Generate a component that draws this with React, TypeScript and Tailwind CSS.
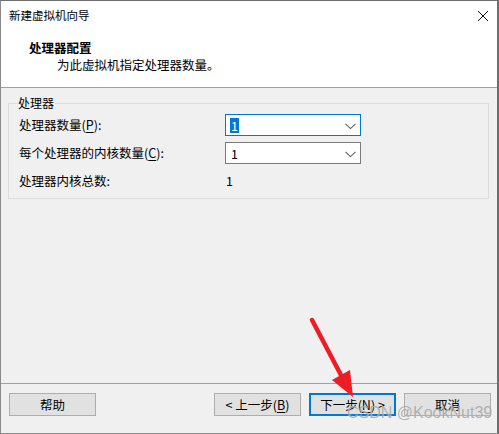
import React from "react";

const font = { fontFamily: '"Noto Sans CJK SC", "Microsoft YaHei", sans-serif' };

function Chevron() {
  return (
    <svg width="11" height="7" viewBox="0 0 11 7" className="absolute right-[4px] top-[8px]">
      <path d="M0.5 0.8 L5.5 5.6 L10.5 0.8" fill="none" stroke="#606060" strokeWidth="1.1" />
    </svg>
  );
}

function U({ children }: { children: React.ReactNode }) {
  return <span className="underline underline-offset-2">{children}</span>;
}

export default function App() {
  return (
    <div
      className="relative w-[499px] h-[434px] bg-[#f0f0f0] border-t border-l border-b border-r-2 border-t-[#6e6e6e] border-l-[#8a8a8a] border-b-[#8a8a8a] border-r-[#6e6e6e] flex flex-col text-[12.5px] text-black overflow-hidden"
      style={font}
    >
      {/* Header */}
      <div className="h-[86px] bg-white relative shrink-0 border-b border-[#a0a0a0] box-content">
        <div className="absolute left-[8px] top-[5px] text-[11.5px] leading-[18px]">新建虚拟机向导</div>
        <svg width="12" height="12" viewBox="0 0 12 12" className="absolute right-[8px] top-[9px]">
          <path d="M1 1 L11 11 M11 1 L1 11" stroke="#111" strokeWidth="1" />
        </svg>
        <div className="absolute left-[28px] top-[38px] font-bold leading-[18px]">处理器配置</div>
        <div className="absolute left-[56px] top-[55px] leading-[18px]">为此虚拟机指定处理器数量。</div>
      </div>

      {/* Content */}
      <div className="flex-1 pt-[15px] pl-[7px] pr-[8px]">
        <div className="relative border border-[#dcdcdc] pt-[10px] pb-[6px] pl-[10px] flex flex-col gap-[6px]">
          <div className="absolute left-[8px] top-[-10px] px-[1px] bg-[#f0f0f0] text-[12px] leading-[18px]">处理器</div>
          <div className="flex items-center h-[22px]">
            <div className="w-[206px] leading-[18px]">
              处理器数量(<U>P</U>):
            </div>
            <div className="relative w-[136px] h-[22px] bg-white border border-[#0078d7] flex items-center pl-[4px]">
              <span className="bg-[#0078d7] text-white px-[1px] leading-[15px]">1</span>
              <Chevron />
            </div>
          </div>
          <div className="flex items-center h-[22px]">
            <div className="w-[206px] leading-[18px]">
              每个处理器的内核数量(<U>C</U>):
            </div>
            <div className="relative w-[136px] h-[22px] bg-white border border-[#7a7a7a] flex items-center pl-[5px]">
              <span className="leading-[15px]">1</span>
              <Chevron />
            </div>
          </div>
          <div className="flex items-center h-[22px]">
            <div className="w-[207px] leading-[18px]">处理器内核总数:</div>
            <div className="leading-[18px]">1</div>
          </div>
        </div>
      </div>

      {/* Footer */}
      <div className="h-[40px] shrink-0 border-t border-[#a0a0a0] box-content flex items-start justify-between pt-[9px] pl-[8px] pr-[6px]">
        <button className="w-[87px] h-[23px] bg-[#e1e1e1] border border-[#adadad] leading-[18px]">帮助</button>
        <div className="flex gap-[8px]">
          <button className="w-[87px] h-[23px] bg-[#e1e1e1] border border-[#adadad] leading-[18px]">
            &lt; 上一步(<U>B</U>)
          </button>
          <button className="w-[87px] h-[23px] bg-[#e1e1e1] border-2 border-[#0078d7] leading-[18px]">
            下一步(<U>N</U>) &gt;
          </button>
          <button className="w-[87px] h-[23px] bg-[#e1e1e1] border border-[#adadad] leading-[18px]">取消</button>
        </div>
      </div>

      {/* Red arrow annotation */}
      <svg width="499" height="434" className="absolute left-[-1px] top-[-1px] pointer-events-none">
        <line x1="312" y1="320" x2="342" y2="377" stroke="#ee1c25" strokeWidth="4.5" strokeLinecap="round" />
        <polygon points="353,397 332,380 350,370" fill="#ee1c25" />
      </svg>

      {/* Watermark */}
      <div
        className="absolute left-[346px] top-[402px] text-[16px] leading-[20px] text-[rgba(150,150,150,0.75)] pointer-events-none"
        style={{ fontFamily: '"Liberation Sans", Arial, sans-serif', textShadow: "0 0 1px rgba(255,255,255,0.6)" }}
      >
        CSDN @KookNut39
      </div>
    </div>
  );
}
